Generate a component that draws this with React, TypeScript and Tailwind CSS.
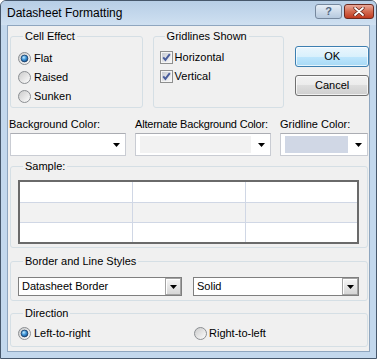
import React from 'react';

const Radio: React.FC<{ checked?: boolean }> = ({ checked }) => (
  <svg width="13" height="13" viewBox="0 0 13 13" className="shrink-0">
    <defs>
      <linearGradient id="radioBg" x1="0" y1="0" x2="1" y2="1">
        <stop offset="0" stopColor="#c9c9c9" />
        <stop offset="1" stopColor="#ffffff" />
      </linearGradient>
      <radialGradient id="radioDot" cx="0.4" cy="0.35" r="0.75">
        <stop offset="0" stopColor="#c4ecff" />
        <stop offset="0.45" stopColor="#3f95d8" />
        <stop offset="1" stopColor="#0b3f78" />
      </radialGradient>
    </defs>
    <circle cx="6.5" cy="6.5" r="6" fill="url(#radioBg)" stroke="#8b8e92" />
    {checked && <circle cx="6.5" cy="6.5" r="3.4" fill="url(#radioDot)" stroke="#1b3c66" strokeWidth="0.8" />}
  </svg>
);

const Check: React.FC = () => (
  <svg width="13" height="13" viewBox="0 0 13 13" className="shrink-0">
    <defs>
      <linearGradient id="checkBg" x1="0" y1="0" x2="1" y2="1">
        <stop offset="0" stopColor="#c8ccd3" />
        <stop offset="1" stopColor="#f7f7f7" />
      </linearGradient>
    </defs>
    <rect x="0.5" y="0.5" width="12" height="12" fill="#f5f5f5" stroke="#8e8f8f" />
    <rect x="2" y="2" width="9" height="9" fill="url(#checkBg)" />
    <path d="M3.2 6.3 L5.4 8.9 L9.8 3.2" stroke="#4a5e9c" strokeWidth="1.9" fill="none" />
  </svg>
);

const Arrow: React.FC = () => (
  <svg width="7" height="4" viewBox="0 0 7 4" className="shrink-0">
    <polygon points="0,0 7,0 3.5,4" fill="#000" />
  </svg>
);

const ColorPick: React.FC<{ swatch?: string; width: string }> = ({ swatch, width }) => (
  <div className={`${width} h-[23px] flex items-center bg-white border border-[#c9ccd3] border-t-[#abadb3] pl-[4px] pr-[5px] gap-[7px]`}>
    <div className="flex-1 h-[17px]" style={{ backgroundColor: swatch || '#ffffff' }} />
    <Arrow />
  </div>
);

const Combo: React.FC<{ value: string; width: string }> = ({ value, width }) => (
  <div className={`${width} h-[19px] flex items-stretch bg-white border border-[#7f7f7f]`}>
    <span className="flex-1 flex items-center pl-[3px]">{value}</span>
    <div className="w-[16px] flex items-center justify-center border border-[#a3a3a3] bg-linear-to-b from-[#f6f6f6] to-[#d6d6d6] shadow-[inset_1px_1px_0_#ffffff]">
      <Arrow />
    </div>
  </div>
);

const Group: React.FC<{ title: string; className: string; children: React.ReactNode }> = ({ title, className, children }) => (
  <fieldset className={`border border-[#d5dfe5] rounded-[3px] ${className}`}>
    <legend className="ml-[5px] px-[2px] leading-[13px]">{title}</legend>
    {children}
  </fieldset>
);

export default function App() {
  return (
    <div className="w-[377px] h-[359px] flex flex-col bg-[#c3d8ed] border border-[#46576b] rounded-t-[6px] font-['Liberation_Sans',Arial,sans-serif] text-[11px] text-black">
      {/* title bar */}
      <div className="h-[24px] flex items-start justify-between pl-[6px] pr-[2px] bg-linear-to-b from-[#b7cee6] to-[#cfe0f1] rounded-t-[5px]">
        <span className="text-[12px] leading-[24px]">Datasheet Formatting</span>
        <div className="flex gap-[2px] mt-[3px]">
          <div className="w-[27px] h-[15px] flex items-center justify-center rounded-[3px] border border-[#76889e] bg-linear-to-b from-[#e6eef7] to-[#b6c9de] text-[#51657f] font-bold text-[11px] leading-none">?</div>
          <div className="w-[30px] h-[15px] flex items-center justify-center rounded-[3px] border border-[#6b2a20] bg-linear-to-b from-[#e9a99a] via-[#d36a50] to-[#c0391f]">
            <svg width="12" height="9" viewBox="0 0 12 9">
              <path d="M2 1 L10 8 M10 1 L2 8" stroke="#5a1d14" strokeWidth="3.2" strokeLinecap="round" />
              <path d="M2 1 L10 8 M10 1 L2 8" stroke="#ffffff" strokeWidth="1.8" strokeLinecap="round" />
            </svg>
          </div>
        </div>
      </div>

      {/* content */}
      <div className="flex-1 mx-[6px] mb-[6px] bg-[#f0f0f0] border border-[#8fa6bf] pl-[2px] pt-[4px] flex flex-col">
        <div className="flex">
          <Group title="Cell Effect" className="w-[133px] h-[78px] pl-[7px] pt-[6px]">
            {['Flat', 'Raised', 'Sunken'].map((t, i) => (
              <div key={t} className="h-[19px] flex items-center gap-[3px]">
                <Radio checked={i === 0} />
                <span>{t}</span>
              </div>
            ))}
          </Group>
          <Group title="Gridlines Shown" className="w-[132px] h-[78px] ml-[10px] pl-[6px] pt-[5px]">
            {['Horizontal', 'Vertical'].map((t) => (
              <div key={t} className="h-[19px] flex items-center gap-[2px]">
                <Check />
                <span>{t}</span>
              </div>
            ))}
          </Group>
          <div className="ml-[11px] w-[74px] pt-[16px] flex flex-col gap-[8px]">
            <button className="h-[21px] rounded-[3px] border border-[#3c7fb1] bg-[linear-gradient(180deg,#eaf6fd_0%,#d9f0fc_50%,#bee6fd_50%,#a7d9f5_100%)] shadow-[inset_0_0_0_1px_rgba(255,255,255,0.7)]">OK</button>
            <button className="h-[21px] rounded-[3px] border border-[#707070] bg-[linear-gradient(180deg,#f2f2f2_0%,#ebebeb_50%,#dddddd_50%,#cfcfcf_100%)] shadow-[inset_0_0_0_1px_rgba(255,255,255,0.7)]">Cancel</button>
          </div>
        </div>

        <div className="flex gap-[9px] mt-[10px]">
          <div className="flex flex-col gap-[2px]">
            <span className="leading-[13px] whitespace-nowrap -ml-[1px]">Background Color:</span>
            <ColorPick width="w-[116px]" />
          </div>
          <div className="flex flex-col gap-[2px]">
            <span className="leading-[13px] whitespace-nowrap tracking-[-0.2px]">Alternate Background Color:</span>
            <ColorPick width="w-[136px]" swatch="#f2f2f2" />
          </div>
          <div className="flex flex-col gap-[2px]">
            <span className="leading-[13px] whitespace-nowrap">Gridline Color:</span>
            <ColorPick width="w-[88px]" swatch="#d0d7e5" />
          </div>
        </div>

        <Group title="Sample:" className="w-[358px] h-[88px] mt-[4px] pl-[7px] pt-[7px]">
          <div className="w-[341px] border-2 border-[#6a6a6a] bg-white flex flex-col">
            {['bg-white h-[20px]', 'bg-[#f2f2f2] h-[19px]', 'bg-white h-[19px]'].map((r, i) => (
              <div key={i} className={`flex ${r} ${i < 2 ? 'border-b border-[#d0d7e5] box-content' : ''}`}>
                <div className="w-[112px] border-r border-[#d0d7e5] box-content" />
                <div className="w-[112px] border-r border-[#d0d7e5] box-content" />
                <div className="flex-1" />
              </div>
            ))}
          </div>
        </Group>

        <Group title="Border and Line Styles" className="w-[358px] h-[46px] mt-[7px] pl-[7px] pt-[9px]">
          <div className="flex gap-[11px]">
            <Combo value="Datasheet Border" width="w-[164px]" />
            <Combo value="Solid" width="w-[166px]" />
          </div>
        </Group>

        <Group title="Direction" className="w-[358px] h-[40px] mt-[6px] pl-[7px] pt-[4px]">
          <div className="flex h-[19px] items-center">
            <div className="w-[176px] flex items-center gap-[3px]">
              <Radio checked />
              <span>Left-to-right</span>
            </div>
            <div className="flex items-center gap-[2px]">
              <Radio />
              <span>Right-to-left</span>
            </div>
          </div>
        </Group>
      </div>
    </div>
  );
}
